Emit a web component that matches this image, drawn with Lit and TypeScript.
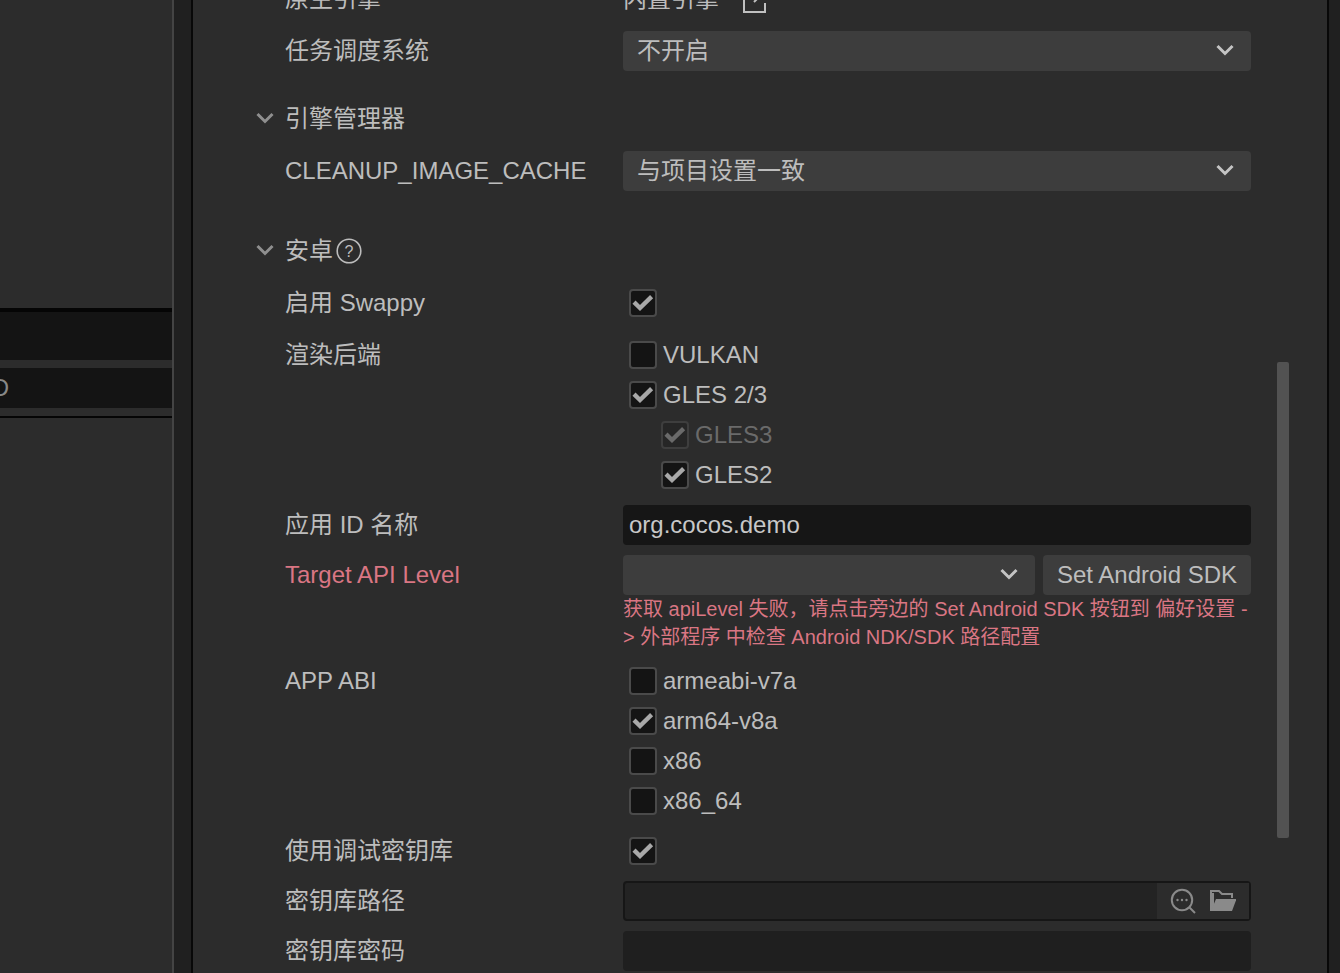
import { LitElement, html, css, svg } from "lit";
import { customElement } from "lit/decorators.js";

const chevron = svg`<path d="M1.5 4 L9 11.500 L16.5 4" fill="none" stroke="currentColor" stroke-width="3"/>`;
const check = svg`<path d="M3 11.2 L9 17 L20.6 5.6" fill="none" stroke="currentColor" stroke-width="4.4"/>`;

@customElement("app-root")
export class AppRoot extends LitElement {
  static styles = css`
    :host {
      display: flex;
      width: 1340px;
      height: 973px;
      overflow: hidden;
      background: #2c2c2c;
      color: #bdbdbd;
      font-family: "Liberation Sans", "Noto Sans CJK SC", sans-serif;
      font-size: 24px;
      line-height: 40px;
    }
    .left {
      width: 172px;
      flex: none;
      background: #2c2c2c;
      border-right: 2px solid #444;
      display: flex;
      flex-direction: column;
      overflow: hidden;
    }
    .left-head {
      margin-top: 308px;
      height: 48px;
      border-top: 4px solid #050505;
      background: #141414;
    }
    .left-input {
      margin-top: 8px;
      height: 40px;
      background: #141414;
      display: flex;
      align-items: center;
      color: #888;
    }
    .left-input span { margin-left: -15px; }
    .left-rule { margin-top: 8px; height: 2px; background: #050505; }
    .strip { width: 17px; flex: none; background: #202020; }
    .panel {
      flex: 1;
      min-width: 0;
      border-left: 2px solid #080808;
      border-right: 2px solid #080808;
      background: #2c2c2c;
      position: relative;
      overflow: hidden;
    }
    .end { width: 11px; flex: none; background: #202020; }
    .content {
      margin-top: -21px;
      padding-left: 92px;
      width: 966px;
      display: flex;
      flex-direction: column;
    }
    .row {
      display: grid;
      grid-template-columns: 338px 628px;
      min-height: 40px;
      margin-bottom: 10px;
    }
    .row.wide { margin-bottom: 12px; }
    .label, .value { display: flex; align-items: center; height: 40px; white-space: nowrap; }
    .value { gap: 24px; }
    .err { color: #da7683; }
    .head {
      display: flex;
      align-items: center;
      height: 40px;
      margin-left: -29px;
      margin-bottom: 12px;
    }
    .head .chev { width: 18px; height: 18px; margin: 0 11px 0 0; color: #8f8f8f; }
    .s1 { margin-top: 18px; }
    .s2 { margin-top: 30px; }
    .help { width: 26px; height: 26px; margin-left: 3px; }
    .select {
      height: 40px;
      background: #3d3d3d;
      border-radius: 4px;
      display: flex;
      align-items: center;
      justify-content: space-between;
      padding: 0 17px 0 14px;
      box-sizing: border-box;
      flex: 1;
    }
    .select svg { width: 18px; height: 18px; color: #c4c4c4; margin-left: auto; }
    .input {
      height: 40px;
      background: #161616;
      border-radius: 4px;
      display: flex;
      align-items: center;
      padding: 0 6px;
      color: #c8c8c8;
    }
    .input.pw { background: #1f1f1f; }
    .pair { display: flex; gap: 8px; }
    .pair .select { width: 412px; flex: none; }
    .btn {
      flex: 1;
      height: 40px;
      background: #3d3d3d;
      border-radius: 4px;
      display: flex;
      align-items: center;
      justify-content: center;
    }
    .msg {
      color: #da7683;
      font-size: 20px;
      line-height: 28px;
      height: 56px;
      overflow-wrap: anywhere;
      width: 628px;
      white-space: normal;
    }
    .checks { display: flex; flex-direction: column; }
    .cb { display: flex; align-items: center; gap: 6px; height: 40px; padding-left: 6px; }
    .cb.sub { margin-left: 32px; }
    .cb.off { color: #6a6a6a; }
    .box {
      width: 28px;
      height: 28px;
      box-sizing: border-box;
      border: 2px solid #4a4a4a;
      border-radius: 4px;
      background: #141414;
      color: #a8a8a8;
      flex: none;
    }
    .cb.off .box { background: #262626; border-color: #3e3e3e; color: #6a6a6a; }
    .box svg { display: block; width: 24px; height: 24px; margin: 0; }
    .path {
      height: 40px;
      box-sizing: border-box;
      border: 2px solid #161616;
      border-radius: 4px;
      background: #232323;
      display: flex;
      justify-content: flex-end;
    }
    .tools {
      width: 92px;
      background: #2c2c2c;
      display: flex;
      align-items: center;
      color: #8a8a8a;
      gap: 14px;
      padding-left: 13px;
      box-sizing: border-box;
    }
    .tools svg { width: 26px; height: 26px; flex: none; }
    .bar {
      position: absolute;
      left: 1084px;
      top: 362px;
      width: 12px;
      height: 476px;
      border-radius: 2px;
      background: #525252;
    }
    .ext { width: 23px; height: 24px; margin-top: 4px; flex: none; }
  `;

  private chev() {
    return html`<svg class="chev" viewBox="0 0 18 18">${chevron}</svg>`;
  }

  private select(text: string) {
    return html`<div class="select">${text ? html`<span>${text}</span>` : ""}<svg viewBox="0 0 18 18">${chevron}</svg></div>`;
  }

  private cb(text: string, on: boolean, cls = "") {
    return html`<div class="cb ${cls}">
      <div class="box">${on ? html`<svg viewBox="0 0 24 24">${check}</svg>` : ""}</div>
      ${text ? html`<span>${text}</span>` : ""}
    </div>`;
  }

  render() {
    return html`
      <div class="left">
        <div class="left-head"></div>
        <div class="left-input"><span>ID</span></div>
        <div class="left-rule"></div>
      </div>
      <div class="strip"></div>
      <div class="panel">
        <div class="content">
          <div class="row wide">
            <div class="label">原生引擎</div>
            <div class="value">
              <span>内置引擎</span>
              <svg class="ext" viewBox="0 0 23 24">
                <path d="M9 2 H1 V23 H22 V14 M11 13 L22 2 M15 1 H22 V9" fill="none" stroke="#c0c0c0" stroke-width="2"/>
              </svg>
            </div>
          </div>
          <div class="row">
            <div class="label">任务调度系统</div>
            ${this.select("不开启")}
          </div>
          <div class="head s1">${this.chev()}<span>引擎管理器</span></div>
          <div class="row">
            <div class="label">CLEANUP_IMAGE_CACHE</div>
            ${this.select("与项目设置一致")}
          </div>
          <div class="head s2">
            ${this.chev()}<span>安卓</span>
            <svg class="help" viewBox="0 0 26 26">
              <circle cx="13" cy="13" r="11.8" fill="none" stroke="#bdbdbd" stroke-width="1.6"/>
              <text x="13" y="19" text-anchor="middle" font-size="16" fill="#bdbdbd">?</text>
            </svg>
          </div>
          <div class="row wide">
            <div class="label">启用 Swappy</div>
            ${this.cb("", true)}
          </div>
          <div class="row">
            <div class="label">渲染后端</div>
            <div class="checks">
              ${this.cb("VULKAN", false)}
              ${this.cb("GLES 2/3", true)}
              ${this.cb("GLES3", true, "sub off")}
              ${this.cb("GLES2", true, "sub")}
            </div>
          </div>
          <div class="row">
            <div class="label">应用 ID 名称</div>
            <div class="input">org.cocos.demo</div>
          </div>
          <div class="row">
            <div class="label err">Target API Level</div>
            <div>
              <div class="pair">
                ${this.select("")}
                <div class="btn">Set Android SDK</div>
              </div>
              <div class="msg">获取 apiLevel 失败，请点击旁边的 Set Android SDK 按钮到 偏好设置 -&gt; 外部程序 中检查 Android NDK/SDK 路径配置</div>
            </div>
          </div>
          <div class="row">
            <div class="label">APP ABI</div>
            <div class="checks">
              ${this.cb("armeabi-v7a", false)}
              ${this.cb("arm64-v8a", true)}
              ${this.cb("x86", false)}
              ${this.cb("x86_64", false)}
            </div>
          </div>
          <div class="row">
            <div class="label">使用调试密钥库</div>
            ${this.cb("", true)}
          </div>
          <div class="row">
            <div class="label">密钥库路径</div>
            <div class="path">
              <div class="tools">
                <svg viewBox="0 0 26 26">
                  <circle cx="12" cy="12" r="10.2" fill="none" stroke="currentColor" stroke-width="2"/>
                  <path d="M19 19 L25 25" stroke="currentColor" stroke-width="2"/>
                  <circle cx="7.5" cy="12" r="1.2" fill="currentColor"/>
                  <circle cx="12" cy="12" r="1.2" fill="currentColor"/>
                  <circle cx="16.5" cy="12" r="1.2" fill="currentColor"/>
                </svg>
                <svg viewBox="0 0 26 26">
                  <path d="M1 23 V3 H9 L12 6 H22 V10 M3 21 L3 6 V5" fill="none" stroke="currentColor" stroke-width="2"/>
                  <path d="M1 23 L6 11 H26.500 L22 23 Z" fill="currentColor"/>
                </svg>
              </div>
            </div>
          </div>
          <div class="row">
            <div class="label">密钥库密码</div>
            <div class="input pw"></div>
          </div>
        </div>
        <div class="bar"></div>
      </div>
      <div class="end"></div>
    `;
  }
}
